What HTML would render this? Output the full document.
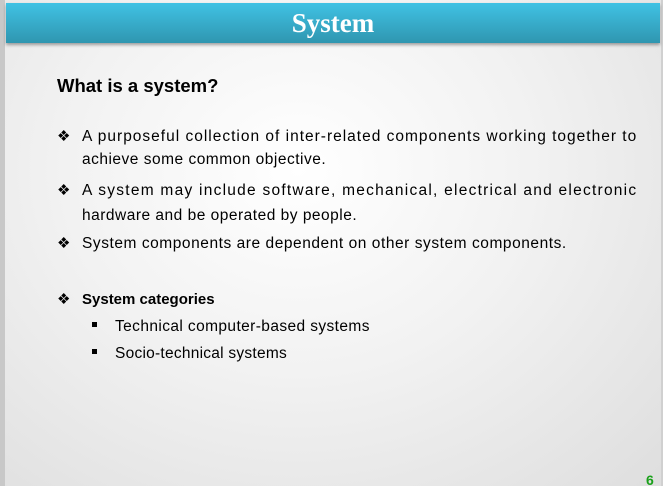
<!DOCTYPE html>
<html><head><style>
body{margin:0;width:663px;height:486px;overflow:hidden;font-family:"Liberation Sans",sans-serif;}
.bg{position:absolute;left:0;top:0;width:663px;height:486px;background:radial-gradient(ellipse at 45% 35%,#ffffff 0%,#f2f2f2 45%,#dedede 100%);}
.lb{position:absolute;left:0;top:0;width:5px;height:486px;background:#c8c8c8;}
.rb{position:absolute;right:0;top:0;width:2px;height:486px;background:#d0d0d0;}
.hdr{position:absolute;left:6px;top:3px;width:654px;height:40px;background:linear-gradient(#40c2e4,#2f96b0);box-shadow:0 2px 3px rgba(0,0,0,.35);}
.hdr div{font-family:"Liberation Serif",serif;font-weight:bold;color:#fff;font-size:27px;text-align:center;line-height:40px;}
.t{position:absolute;color:#000;white-space:nowrap;}
.q{font-weight:bold;font-size:18.5px;left:57px;top:75px;}
.b{font-size:15.5px;}
.d{position:absolute;font-size:15px;left:57px;}
.sq{position:absolute;width:5px;height:5px;background:#000;left:92px;}
.n{position:absolute;left:646px;top:472px;color:#1aa01a;font-weight:bold;font-size:14px;}
</style></head><body>
<div class="bg"></div><div class="lb"></div><div class="rb"></div>
<div class="hdr"><div>System</div></div>
<div class="t q">What is a system?</div>
<div class="d" style="top:127px">❖</div>
<div class="t b" style="left:82px;top:128px;letter-spacing:1px">A purposeful collection of inter-related components working together to</div>
<div class="t b" style="left:82px;top:151px;letter-spacing:0.5px">achieve some common objective.</div>
<div class="d" style="top:181px">❖</div>
<div class="t b" style="left:82px;top:182px;letter-spacing:1.25px">A system may include software, mechanical, electrical and electronic</div>
<div class="t b" style="left:82px;top:207px;letter-spacing:0.5px">hardware and be operated by people.</div>
<div class="d" style="top:234px">❖</div>
<div class="t b" style="left:82px;top:235px;letter-spacing:0.55px">System components are dependent on other system components.</div>
<div class="d" style="top:290px">❖</div>
<div class="t" style="left:82px;top:291px;font-size:15px;font-weight:bold">System categories</div>
<div class="sq" style="top:322px"></div>
<div class="t b" style="left:115px;top:318px;letter-spacing:0.4px">Technical computer-based systems</div>
<div class="sq" style="top:349px"></div>
<div class="t b" style="left:115px;top:345px;letter-spacing:0.25px">Socio-technical systems</div>
<div class="n">6</div>
</body></html>
